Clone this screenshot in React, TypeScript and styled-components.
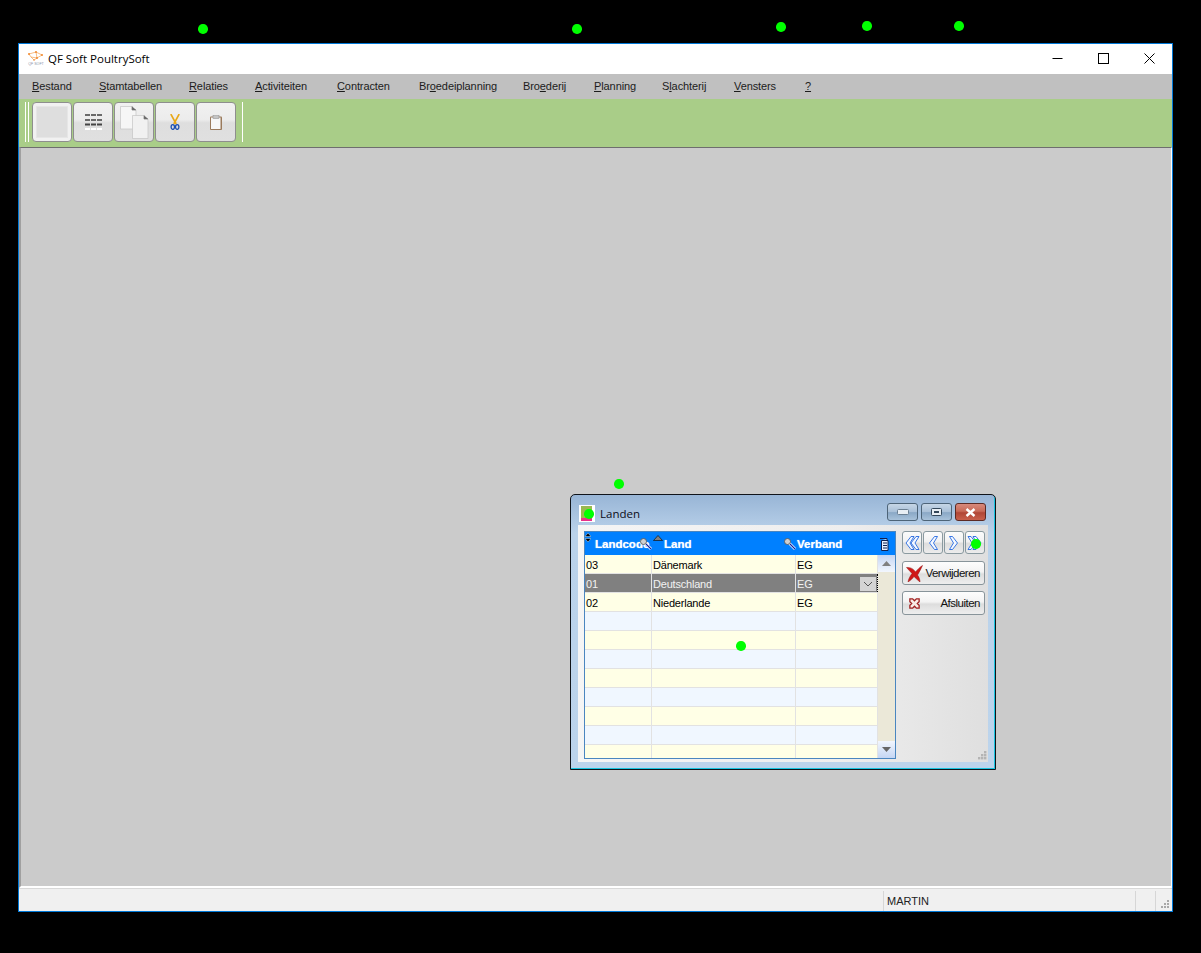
import { Fragment } from 'react';
import styled, { createGlobalStyle } from 'styled-components';

const GlobalStyle = createGlobalStyle`
  html, body {
    margin: 0;
    padding: 0;
    background: #000;
  }
  * {
    box-sizing: border-box;
  }
`;

const Page = styled.div`
  position: relative;
  width: 1201px;
  height: 953px;
  padding: 43px 28px 0 18px;
  background: #000;
  overflow: hidden;
  font-family: 'Liberation Sans', Arial, sans-serif;
  color: #000;
`;

const Dot = styled.span<{ $x: number; $y: number }>`
  position: absolute;
  left: ${(p) => p.$x - 4}px;
  top: ${(p) => p.$y - 4}px;
  width: 9.5px;
  height: 9.5px;
  border-radius: 50%;
  background: #00ff00;
  z-index: 10;
`;

const MainWindow = styled.div`
  display: flex;
  flex-direction: column;
  width: 1155px;
  height: 869px;
  border: 1px solid #0078d7;
  background: #fff;
`;

const TitleBar = styled.div`
  display: flex;
  align-items: center;
  height: 30px;
  flex: none;
  padding: 0 0 2px 8px;
  background: #fff;
`;

const AppTitle = styled.span`
  margin-left: 3px;
  font-family: 'Open Sans', sans-serif;
  font-size: 11.5px;
`;

const WinControls = styled.div`
  display: flex;
  margin-left: auto;
  height: 28px;
`;

const WinControl = styled.div`
  display: flex;
  align-items: center;
  justify-content: center;
  width: 46px;
`;

const MenuBar = styled.div`
  display: flex;
  align-items: center;
  flex: none;
  height: 25px;
  padding: 0 0 2px 13px;
  background: #c0c0c0;
  font-family: 'Liberation Sans', sans-serif;
  font-size: 11px;
  letter-spacing: -0.1px;
  color: #1c1c1c;
`;

const MenuItem = styled.span<{ $w: number }>`
  flex: none;
  width: ${(p) => p.$w}px;
  white-space: nowrap;
`;

const MenuKey = styled.span`
  text-decoration: underline;
`;

const Toolbar = styled.div`
  display: flex;
  align-items: center;
  flex: none;
  height: 48px;
  padding: 0 0 2px 6px;
  background: #a9cd88;
`;

const Grip = styled.div`
  flex: none;
  width: 4px;
  height: 40px;
  margin-right: 3px;
  border-left: 1px solid #fff;
  border-right: 1px solid #fff;
`;

const ToolButton = styled.div<{ $blank?: boolean }>`
  display: flex;
  align-items: center;
  justify-content: center;
  flex: none;
  width: 40px;
  height: 40px;
  margin-right: 1px;
  border: 1px solid #8e8e8e;
  border-radius: 4px;
  background: ${(p) =>
    p.$blank
      ? '#f1f1f1'
      : 'linear-gradient(180deg, #f1f1f1 0%, #ececec 44%, #dedede 52%, #e0e0e0 100%)'};
`;

const BlankFace = styled.div`
  width: 32px;
  height: 32px;
  border: 1px solid #e6e6e6;
  background: #dedede;
`;

const ToolEnd = styled.div`
  flex: none;
  width: 1px;
  height: 40px;
  margin-left: 5px;
  background: #fff;
`;

const Desktop = styled.div`
  position: relative;
  flex: 1;
  background: #cbcbcb;
  border-top: 1px solid #6e6e6e;
  border-left: 2px solid #a0a0a0;
  border-right: 1px solid #fff;
  border-bottom: 2px solid #fff;
`;

const StatusBar = styled.div`
  display: flex;
  flex: none;
  height: 23px;
  padding-top: 2px;
  border-top: 1px solid #d8d8d8;
  background: #f0f0f0;
  font-size: 11px;
  color: #222;
`;

const StatusCell = styled.div<{ $w?: number }>`
  display: flex;
  align-items: center;
  ${(p) => (p.$w ? `flex: none; width: ${p.$w}px;` : 'flex: 1;')}
  padding-left: 3px;
  border-right: 1px solid #d6d6d6;
`;

const StatusGrip = styled.div`
  position: relative;
  flex: none;
  width: 16px;
`;

const ChildWindow = styled.div`
  position: absolute;
  left: 549px;
  top: 346px;
  display: flex;
  flex-direction: column;
  width: 426px;
  height: 276px;
  padding: 0 7px 7px;
  border: 1px solid #10141a;
  border-radius: 5px 5px 0 0;
  box-shadow: inset -1px -1px 0 #18c4e0;
  background: linear-gradient(180deg, #98b5d6 0%, #bad2ea 14%, #bcd4ec 100%);
`;

const ChildTitle = styled.div`
  display: flex;
  align-items: center;
  flex: none;
  height: 30px;
  padding: 7px 2px 0 1px;
`;

const ChildIcon = styled.div`
  flex: none;
  width: 16px;
  height: 17px;
  background: #fff;
`;

const ChildLabel = styled.span`
  margin-left: 5px;
  font-family: 'Open Sans', sans-serif;
  font-size: 11.5px;
  color: #0c0c18;
`;

const ChildControls = styled.div`
  display: flex;
  gap: 3px;
  margin: -3px 0 0 auto;
`;

const CaptionButton = styled.div<{ $close?: boolean }>`
  display: flex;
  align-items: center;
  justify-content: center;
  width: 31px;
  height: 18px;
  border: 1px solid ${(p) => (p.$close ? '#5c2a24' : '#4d6478')};
  border-radius: 3px;
  background: ${(p) =>
    p.$close
      ? 'linear-gradient(180deg, #d88a7c 0%, #c86a58 45%, #b04636 55%, #c8604c 100%)'
      : 'linear-gradient(180deg, #c6d6e6 0%, #a9c0d8 48%, #8aa8c6 54%, #a8c2da 100%)'};
`;

const ChildBody = styled.div`
  position: relative;
  display: flex;
  flex: 1;
  gap: 6px;
  padding: 6px 3px 3px 6px;
  background: linear-gradient(90deg, #f5f5f5 0%, #eeeeee 65%, #dfdfdf 100%);
`;

const GridFrame = styled.div`
  position: relative;
  display: flex;
  flex: none;
  width: 312px;
  height: 228px;
  border: 1px solid #4a86c0;
`;

const GridMain = styled.div`
  flex: 1;
  overflow: hidden;
  background: #fff;
`;

const HeaderRow = styled.div`
  position: absolute;
  left: 0;
  top: 0;
  right: 0;
  height: 23px;
  display: grid;
  grid-template-columns: 67px 144px 82px 17px;
  align-items: center;
  background: #0080ff;
  color: #fff;
  font-weight: bold;
  font-size: 11.5px;
  z-index: 2;
`;

const HeaderCell = styled.div<{ $pad: number }>`
  position: relative;
  height: 23px;
  padding: 6px 0 0 ${(p) => p.$pad}px;
  white-space: nowrap;
  overflow: hidden;
  text-shadow: 0 0 1px #cfe6ff;
`;

const HeaderGlyph = styled.svg<{ $left?: number; $right?: number; $top: number }>`
  position: absolute;
  top: ${(p) => p.$top}px;
  ${(p) => (p.$left !== undefined ? `left: ${p.$left}px;` : '')}
  ${(p) => (p.$right !== undefined ? `right: ${p.$right}px;` : '')}
`;

const Rows = styled.div`
  padding-top: 23px;
`;

const Row = styled.div<{ $alt?: boolean; $selected?: boolean }>`
  display: grid;
  grid-template-columns: 67px 144px 82px;
  height: 19px;
  background: ${(p) => (p.$selected ? '#808080' : p.$alt ? '#f0f7ff' : '#ffffe6')};
  color: ${(p) => (p.$selected ? '#f2f2f2' : '#000')};
  font-size: 11px;
  letter-spacing: -0.2px;
`;

const Cell = styled.div`
  position: relative;
  display: flex;
  align-items: center;
  padding: 1px 0 0 1px;
  border-right: 1px solid #e2e2e2;
  border-bottom: 1px solid #e2e2e2;
  white-space: nowrap;
`;

const ComboArrow = styled.div`
  position: absolute;
  right: 1px;
  top: 3px;
  display: flex;
  align-items: center;
  justify-content: center;
  width: 16px;
  height: 14px;
  background: #d4d4d4;
`;

const FocusMark = styled.div`
  position: absolute;
  right: -1px;
  top: 0;
  bottom: 0;
  border-right: 1px dotted #000;
`;

const ScrollBar = styled.div`
  display: flex;
  flex-direction: column;
  justify-content: space-between;
  flex: none;
  width: 17px;
  margin-top: 23px;
  background: #ebe8d8;
`;

const ScrollButton = styled.div<{ $down?: boolean }>`
  display: flex;
  align-items: center;
  justify-content: center;
  height: 17px;
  background: linear-gradient(
    ${(p) => (p.$down ? '180deg' : '0deg')},
    #f2f6fd 0%,
    #c5d6f4 100%
  );
`;

const SidePanel = styled.div`
  display: flex;
  flex-direction: column;
  flex: none;
  width: 83px;
`;

const NavRow = styled.div`
  display: flex;
  justify-content: space-between;
  margin-bottom: 7px;
`;

const NavButton = styled.div`
  display: flex;
  align-items: center;
  justify-content: center;
  width: 20px;
  height: 23px;
  border: 1px solid #8a9aa0;
  border-radius: 3px;
  background: linear-gradient(180deg, #fbfbfb 0%, #f2f2f2 45%, #dedede 55%, #ececec 100%);
`;

const ActionButton = styled.div`
  display: flex;
  align-items: center;
  justify-content: space-between;
  height: 24px;
  margin-bottom: 6px;
  padding: 0 4px 0 3px;
  border: 1px solid #88949a;
  border-radius: 3px;
  background: linear-gradient(180deg, #fdfdfd 0%, #f3f3f3 45%, #dddddd 55%, #eeeeee 100%);
  font-size: 11.5px;
  letter-spacing: -0.5px;
  color: #111;
`;

const CloseGlyph = styled.svg`
  margin-left: 2px;
`;

const ResizeDots = styled.svg<{ $right: number; $bottom: number }>`
  position: absolute;
  right: ${(p) => p.$right}px;
  bottom: ${(p) => p.$bottom}px;
`;

function Chevrons({ dir, double }: { dir: 'left' | 'right'; double?: boolean }) {
  const shape = 'M7 2 L2 8.5 L7 15 L10 15 L6 8.5 L10 2 Z';
  const flip = dir === 'right' ? 'translate(16 0) scale(-1 1)' : undefined;
  return (
    <svg width="16" height="18" viewBox="0 0 16 18" fill="#f4f8ff" stroke="#2468e0" strokeWidth="0.9">
      <g transform={flip}>
        {double && <path d={shape} transform="translate(5 0.5)" />}
        <path d={shape} transform={double ? 'translate(0 0.5)' : 'translate(2.5 0.5)'} />
      </g>
    </svg>
  );
}

function Magnifier({ right }: { right: number }) {
  return (
    <HeaderGlyph $right={right} $top={6} width="12" height="12" viewBox="0 0 12 12">
      <path d="M5 5 L11 11" stroke="#fff" strokeWidth="2.6" />
      <path d="M6 6 L11 11" stroke="#1020a0" strokeWidth="1.1" />
      <circle cx="3.5" cy="3.5" r="3" fill="#d0d0d0" stroke="#505050" strokeWidth="0.8" />
    </HeaderGlyph>
  );
}

const menuItems: [string, string, string, number][] = [
  ['', 'B', 'estand', 67],
  ['', 'S', 'tamtabellen', 90],
  ['', 'R', 'elaties', 66],
  ['', 'A', 'ctiviteiten', 82],
  ['', 'C', 'ontracten', 82],
  ['Br', 'o', 'edeiplanning', 104],
  ['Bro', 'e', 'derij', 71],
  ['', 'P', 'lanning', 68],
  ['S', 'l', 'achterij', 72],
  ['', 'V', 'ensters', 71],
  ['', '?', '', 20],
];

const rows = [
  ['03', 'Dänemark', 'EG'],
  ['01', 'Deutschland', 'EG'],
  ['02', 'Niederlande', 'EG'],
  ['', '', ''],
  ['', '', ''],
  ['', '', ''],
  ['', '', ''],
  ['', '', ''],
  ['', '', ''],
  ['', '', ''],
  ['', '', ''],
];

const dots = [
  [202, 28],
  [576, 28],
  [780, 26],
  [866, 25],
  [958, 25],
  [618, 483],
  [740, 645],
  [588, 513],
  [975, 543],
];

export default function App() {
  return (
    <Page>
      <GlobalStyle />
      <MainWindow>
        <TitleBar>
          <svg width="18" height="18" viewBox="0 0 18 18" fill="none">
            <path d="M2 5 L9 3 L15 6 L10 9 L4 8 Z M9 3 L10 9 L7 11 M4 8 L7 11" stroke="#f4a050" strokeWidth="0.7" />
            <circle cx="9" cy="3" r="1" fill="#f08a30" />
            <circle cx="15" cy="6" r="1" fill="#f08a30" />
            <circle cx="2" cy="5" r="1" fill="#f08a30" />
            <circle cx="10" cy="9" r="1" fill="#f08a30" />
            <circle cx="7" cy="11" r="0.8" fill="#f08a30" />
            <text x="9" y="16" textAnchor="middle" fontSize="3.6" fill="#8a94a8" fontFamily="Liberation Sans">
              QF SOFT
            </text>
          </svg>
          <AppTitle>QF Soft PoultrySoft</AppTitle>
          <WinControls>
            <WinControl>
              <svg width="11" height="11" viewBox="0 0 11 11">
                <path d="M0.5 5.5H10.5" stroke="#000" />
              </svg>
            </WinControl>
            <WinControl>
              <svg width="11" height="11" viewBox="0 0 11 11" fill="none">
                <rect x="0.5" y="0.5" width="10" height="10" stroke="#000" />
              </svg>
            </WinControl>
            <WinControl>
              <svg width="11" height="11" viewBox="0 0 11 11" fill="none">
                <path d="M0.5 0.5L10.5 10.5M10.5 0.5L0.5 10.5" stroke="#000" />
              </svg>
            </WinControl>
          </WinControls>
        </TitleBar>

        <MenuBar>
          {menuItems.map(([before, key, after, w]) => (
            <MenuItem key={before + key + after} $w={w}>
              {before}
              <MenuKey>{key}</MenuKey>
              {after}
            </MenuItem>
          ))}
        </MenuBar>

        <Toolbar>
          <Grip />
          <ToolButton $blank>
            <BlankFace />
          </ToolButton>
          <ToolButton>
            <svg width="17" height="16" viewBox="0 0 17 16">
              <path d="M0 1H5M6 1H11M12 1H17M0 6H5M6 6H11M12 6H17" stroke="#6a6a6a" strokeWidth="2" />
              <path d="M0 10.5H5M6 10.5H11M12 10.5H17" stroke="#444" strokeWidth="2" />
              <path d="M0 15H5M6 15H11M12 15H17" stroke="#fff" strokeWidth="2" />
            </svg>
          </ToolButton>
          <ToolButton>
            <svg width="29" height="33" viewBox="0 0 29 33" fill="#f6f6f6" stroke="#c4c4c4" strokeWidth="0.7">
              <path d="M0.5 0.5H12L16 4V23H0.5Z" />
              <path d="M12 0.5V4H16" fill="#666" stroke="#777" />
              <path d="M12.5 9.5H24L28 13V32.5H12.5Z" fill="#f1f1f1" />
              <path d="M24 9.5V13H28" fill="#666" stroke="#777" />
            </svg>
          </ToolButton>
          <ToolButton>
            <svg width="10" height="16" viewBox="0 0 10 16" fill="none">
              <path d="M0.8 0L6.2 10M9.2 0L3.8 10" stroke="#e8a818" strokeWidth="1.6" />
              <ellipse cx="2.8" cy="13" rx="1.7" ry="2.4" stroke="#1c4fb0" strokeWidth="1.3" />
              <ellipse cx="7.2" cy="13" rx="1.7" ry="2.4" stroke="#1c4fb0" strokeWidth="1.3" />
            </svg>
          </ToolButton>
          <ToolButton>
            <svg width="12" height="15" viewBox="0 0 12 15">
              <rect x="0" y="1.5" width="12" height="13.5" rx="1" fill="#9a7a5c" />
              <rect x="1" y="2.5" width="9.5" height="11.5" fill="#f7f7f7" />
              <rect x="3" y="0" width="6" height="3.5" fill="#c4c4c4" stroke="#8a8a8a" strokeWidth="0.5" />
            </svg>
          </ToolButton>
          <ToolEnd />
        </Toolbar>

        <Desktop>
          <ChildWindow>
            <ChildTitle>
              <ChildIcon>
                <svg width="16" height="17" viewBox="0 0 16 17">
                  <rect x="2" y="1" width="11" height="12" fill="#9ab850" />
                  <rect x="2" y="13" width="11" height="3" fill="#e8308a" />
                </svg>
              </ChildIcon>
              <ChildLabel>Landen</ChildLabel>
              <ChildControls>
                <CaptionButton>
                  <svg width="12" height="6" viewBox="0 0 12 6">
                    <rect x="0.5" y="0.5" width="11" height="5" rx="1" fill="#e8eef4" stroke="#6a7f92" />
                  </svg>
                </CaptionButton>
                <CaptionButton>
                  <svg width="11" height="8" viewBox="0 0 11 8" fill="#e8eef4">
                    <rect x="0.5" y="0.5" width="10" height="7" rx="1" stroke="#33475a" />
                    <rect x="3" y="3" width="5" height="2" fill="#33475a" />
                  </svg>
                </CaptionButton>
                <CaptionButton $close>
                  <svg width="11" height="9" viewBox="0 0 11 9">
                    <path d="M1.5 1L9.5 8M9.5 1L1.5 8" stroke="#fff" strokeWidth="2.4" />
                  </svg>
                </CaptionButton>
              </ChildControls>
            </ChildTitle>

            <ChildBody>
              <GridFrame>
                <HeaderRow>
                  <HeaderCell $pad={10}>
                    Landcode
                    <HeaderGlyph $left={0} $top={1} width="6" height="9" viewBox="0 0 6 9">
                      <path d="M3 0L6 3.5H0Z M3 9L6 5.5H0Z" fill="#000" stroke="#fff" strokeWidth="0.4" />
                    </HeaderGlyph>
                    <Magnifier right={0} />
                  </HeaderCell>
                  <HeaderCell $pad={12}>
                    Land
                    <HeaderGlyph $left={1} $top={3} width="10" height="6" viewBox="0 0 10 6">
                      <path d="M5 0.5L9.5 5.5H0.5Z" fill="#808080" stroke="#000" strokeWidth="0.6" />
                    </HeaderGlyph>
                    <Magnifier right={0} />
                  </HeaderCell>
                  <HeaderCell $pad={1}>Verband</HeaderCell>
                  <HeaderCell $pad={1}>
                    <svg width="10" height="13" viewBox="0 0 10 13" fill="#fff" stroke="#102050" strokeWidth="1">
                      <path d="M1 0.5H8V2M2.5 2.5H9V12.5H2.5Z" fill="#e8f0ff" />
                      <path d="M4 5H8M4 7.5H8M4 10H8" />
                    </svg>
                  </HeaderCell>
                </HeaderRow>
                <GridMain>
                  <Rows>
                    {rows.map((r, i) => (
                      <Row key={i} $alt={i % 2 === 1} $selected={i === 1}>
                        <Cell>{r[0]}</Cell>
                        <Cell>{r[1]}</Cell>
                        <Cell>
                          {r[2]}
                          {i === 1 && (
                            <Fragment>
                              <ComboArrow>
                                <svg width="10" height="6" viewBox="0 0 10 6" fill="none">
                                  <path d="M1 1L5 5L9 1" stroke="#555" />
                                </svg>
                              </ComboArrow>
                              <FocusMark />
                            </Fragment>
                          )}
                        </Cell>
                      </Row>
                    ))}
                  </Rows>
                </GridMain>
                <ScrollBar>
                  <ScrollButton>
                    <svg width="9" height="5" viewBox="0 0 9 5">
                      <path d="M4.5 0L9 5H0Z" fill="#808080" />
                    </svg>
                  </ScrollButton>
                  <ScrollButton $down>
                    <svg width="9" height="5" viewBox="0 0 9 5">
                      <path d="M4.5 5L9 0H0Z" fill="#666" />
                    </svg>
                  </ScrollButton>
                </ScrollBar>
              </GridFrame>

              <SidePanel>
                <NavRow>
                  <NavButton>
                    <Chevrons dir="left" double />
                  </NavButton>
                  <NavButton>
                    <Chevrons dir="left" />
                  </NavButton>
                  <NavButton>
                    <Chevrons dir="right" />
                  </NavButton>
                  <NavButton>
                    <Chevrons dir="right" double />
                  </NavButton>
                </NavRow>
                <ActionButton>
                  <svg width="17" height="17" viewBox="0 0 17 17">
                    <path d="M0.5 2.5C5 2 8 4.5 9.5 7C11.5 4.5 14 2 16.5 0.5C15 4 13 7.5 11.5 10C13 12 14 14.5 14 17C11.5 15 9.5 13 8 11.5C6.5 13.5 4.5 15.5 2 17C2.5 13.5 4.5 10.5 6 8.5C4 6.5 2.5 4.5 0.5 2.5Z" fill="#d01818" stroke="#901010" strokeWidth="0.5" />
                  </svg>
                  Verwijderen
                </ActionButton>
                <ActionButton>
                  <CloseGlyph width="13" height="13" viewBox="0 0 14 14" fill="#f8ece6" stroke="#a02020" strokeWidth="1.4">
                    <path d="M2 2H5L7 4L9 2H12V5L10 7L12 9V12H9L7 10L5 12H2V9L4 7L2 5Z" />
                  </CloseGlyph>
                  Afsluiten
                </ActionButton>
              </SidePanel>
              <ResizeDots $right={1} $bottom={2} width="9" height="9" viewBox="0 0 9 9" fill="#b4b4b4">
                <rect x="6" y="0" width="2.4" height="2.4" />
                <rect x="3" y="3" width="2.4" height="2.4" />
                <rect x="6" y="3" width="2.4" height="2.4" />
                <rect x="0" y="6" width="2.4" height="2.4" />
                <rect x="3" y="6" width="2.4" height="2.4" />
                <rect x="6" y="6" width="2.4" height="2.4" />
              </ResizeDots>
            </ChildBody>
          </ChildWindow>
        </Desktop>

        <StatusBar>
          <StatusCell />
          <StatusCell $w={252}>MARTIN</StatusCell>
          <StatusCell $w={20} />
          <StatusGrip>
            <ResizeDots $right={2} $bottom={2} width="9" height="9" viewBox="0 0 9 9" fill="#a8a8a8">
              <rect x="6" y="0" width="2" height="2" />
              <rect x="3" y="3" width="2" height="2" />
              <rect x="6" y="3" width="2" height="2" />
              <rect x="0" y="6" width="2" height="2" />
              <rect x="3" y="6" width="2" height="2" />
              <rect x="6" y="6" width="2" height="2" />
            </ResizeDots>
          </StatusGrip>
        </StatusBar>
      </MainWindow>
      {dots.map(([x, y]) => (
        <Dot key={`${x}-${y}`} $x={x} $y={y} />
      ))}
    </Page>
  );
}
